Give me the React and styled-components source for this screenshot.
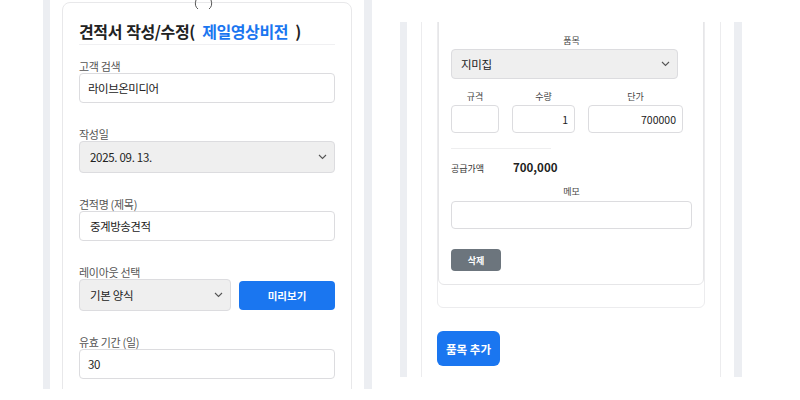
import React from "react";
import styled, { createGlobalStyle } from "styled-components";

const GlobalStyle = createGlobalStyle`
  body {
    margin: 0;
    background: #fff;
    font-family: "Noto Sans CJK KR", "Noto Sans", sans-serif;
    color: #222;
  }
  * { box-sizing: border-box; }
`;

const BLUE = "#1a76f0";

const Chevron = () => (
  <svg width="9" height="6" viewBox="0 0 9 6">
    <path d="M1 1 L4.5 4.5 L8 1" fill="none" stroke="#555" strokeWidth="1.1" />
  </svg>
);

const App = () => {
  return (
    <>
      <GlobalStyle />
      <Page>
        <Panel $w={329} $h={389}>
          <Strip $w={7} />
          <Gutter $l={12} $r={12}>
            <Knob>
              <svg width="24" height="10" viewBox="0 0 24 10">
                <path d="M4 0 Q2 6 6 9" fill="none" stroke="#555" strokeWidth="1" />
                <path d="M19 0 Q21 6 17 9" fill="none" stroke="#555" strokeWidth="1" />
              </svg>
            </Knob>
            <FormCard>
              <Title>
                견적서 작성/수정( <Accent>제일영상비전</Accent> )
              </Title>
              <Field>
                <Label>고객 검색</Label>
                <TextInput>라이브온미디어</TextInput>
              </Field>
              <Field>
                <Label>작성일</Label>
                <SelectBox>
                  <span>2025. 09. 13.</span>
                  <Chevron />
                </SelectBox>
              </Field>
              <Field>
                <Label>견적명 (제목)</Label>
                <TextInput $pad={10}>중계방송견적</TextInput>
              </Field>
              <Field>
                <Label>레이아웃 선택</Label>
                <InlineRow>
                  <SelectBox $w={152}>
                    <span>기본 양식</span>
                    <Chevron />
                  </SelectBox>
                  <PrimaryButton>미리보기</PrimaryButton>
                </InlineRow>
              </Field>
              <Field>
                <Label>유효 기간 (일)</Label>
                <TextInput>30</TextInput>
              </Field>
            </FormCard>
          </Gutter>
          <Strip $w={8} />
        </Panel>

        <Panel $w={342} $h={355} $top={22}>
          <Strip $w={7} />
          <Gutter $l={14} $r={13}>
            <ItemsCard>
              <ItemList>
                <ItemCard>
                  <ItemLabel>품목</ItemLabel>
                  <ItemSelect>
                    <span>지미집</span>
                    <Chevron />
                  </ItemSelect>
                  <SpecRow>
                    <SpecCol $w={48}>
                      <ItemLabel>규격</ItemLabel>
                      <SmallInput />
                    </SpecCol>
                    <SpecCol $w={63}>
                      <ItemLabel>수량</ItemLabel>
                      <SmallInput>1</SmallInput>
                    </SpecCol>
                    <SpecCol $w={95}>
                      <ItemLabel>단가</ItemLabel>
                      <SmallInput>700000</SmallInput>
                    </SpecCol>
                  </SpecRow>
                  <Divider />
                  <SupplyRow>
                    <SupplyLabel>공급가액</SupplyLabel>
                    <SupplyValue>700,000</SupplyValue>
                  </SupplyRow>
                  <MemoLabel>메모</MemoLabel>
                  <SmallInput />
                  <DeleteButton>삭제</DeleteButton>
                </ItemCard>
              </ItemList>
              <AddButton>품목 추가</AddButton>
            </ItemsCard>
          </Gutter>
          <Strip $w={8} />
        </Panel>
      </Page>
    </>
  );
};

export default App;

const Page = styled.div`
  display: flex;
  align-items: flex-start;
  gap: 28px;
  padding-left: 43px;
  width: 800px;
  height: 400px;
  overflow: hidden;
`;

const Panel = styled.div`
  display: flex;
  flex-shrink: 0;
  width: ${({ $w }) => $w}px;
  height: ${({ $h }) => $h}px;
  margin-top: ${({ $top }) => $top || 0}px;
  overflow: hidden;
`;

const Strip = styled.div`
  width: ${({ $w }) => $w}px;
  flex-shrink: 0;
  background: #eceef2;
`;

const Gutter = styled.div`
  flex: 1;
  position: relative;
  padding: 0 ${({ $r }) => $r}px 0 ${({ $l }) => $l}px;
  overflow: hidden;
`;

const Knob = styled.div`
  position: absolute;
  left: 142px;
  top: 0;
  line-height: 0;
`;

const FormCard = styled.div`
  margin-top: 2px;
  height: 420px;
  border: 1px solid #e8e8ea;
  border-radius: 8px;
  padding: 17px 16px;
`;

const Title = styled.div`
  font-size: 16px;
  font-weight: 700;
  line-height: 22px;
  letter-spacing: -0.4px;
  word-spacing: 1px;
  color: #222;
  padding-bottom: 2px;
  border-bottom: 1px solid #f0f0f2;
  margin-bottom: 14px;
`;

const Accent = styled.span`
  color: ${BLUE};
  margin: 0 3px;
`;

const Field = styled.div`
  margin-bottom: 24px;
`;

const Label = styled.div`
  font-size: 11px;
  line-height: 14px;
  color: #555;
  margin-bottom: 0;
  letter-spacing: -0.3px;
`;

const TextInput = styled.div`
  height: 30px;
  border: 1px solid #dcdcdf;
  border-radius: 4px;
  background: #fff;
  display: flex;
  align-items: center;
  padding-left: ${({ $pad }) => $pad || 8}px;
  font-size: 11.5px;
  letter-spacing: -0.5px;
  color: #222;
`;

const SelectBox = styled.div`
  width: ${({ $w }) => ($w ? `${$w}px` : "100%")};
  height: 32px;
  flex-shrink: 0;
  border: 1px solid #dcdcdf;
  border-radius: 4px;
  background: #efefef;
  display: flex;
  align-items: center;
  justify-content: space-between;
  padding: 0 7px 0 10px;
  font-size: 11.5px;
  letter-spacing: -0.3px;
  color: #222;
`;

const InlineRow = styled.div`
  display: flex;
  align-items: center;
  gap: 8px;
`;

const PrimaryButton = styled.div`
  flex: 1;
  height: 29px;
  border-radius: 4px;
  background: ${BLUE};
  color: #fff;
  font-size: 10.5px;
  font-weight: 700;
  display: flex;
  align-items: center;
  justify-content: center;
`;

const ItemsCard = styled.div`
  margin-top: -20px;
  height: 420px;
  border: 1px solid #ececee;
  border-radius: 8px;
  padding: 0 15px;
`;

const ItemList = styled.div`
  margin-top: 8px;
  border: 1px solid #ececee;
  border-radius: 6px;
  padding-bottom: 22px;
`;

const ItemCard = styled.div`
  border: 1px solid #e6e6e8;
  border-radius: 6px;
  padding: 21px 11px 13px 12px;
`;

const ItemLabel = styled.div`
  font-size: 9px;
  line-height: 14px;
  color: #444;
  text-align: center;
  margin-bottom: 1px;
`;

const ItemSelect = styled.div`
  width: 227px;
  height: 30px;
  border: 1px solid #dcdcdf;
  border-radius: 4px;
  background: #efefef;
  display: flex;
  align-items: center;
  justify-content: space-between;
  padding: 0 7px 0 9px;
  font-size: 11.5px;
  letter-spacing: -0.3px;
`;

const SpecRow = styled.div`
  display: flex;
  gap: 13px;
  margin-top: 11px;
`;

const SpecCol = styled.div`
  width: ${({ $w }) => $w}px;
  display: flex;
  flex-direction: column;
`;

const SmallInput = styled.div`
  height: 28px;
  border: 1px solid #dcdcdf;
  border-radius: 4px;
  background: #fff;
  display: flex;
  align-items: center;
  justify-content: flex-end;
  padding-right: 6px;
  font-size: 10.5px;
  color: #222;
`;

const Divider = styled.div`
  width: 100px;
  height: 1px;
  background: #eeeeef;
  margin-top: 15px;
`;

const SupplyRow = styled.div`
  display: flex;
  align-items: baseline;
  margin-top: 10px;
`;

const SupplyLabel = styled.div`
  width: 62px;
  font-size: 9px;
  color: #333;
`;

const SupplyValue = styled.div`
  font-size: 11.5px;
  line-height: 16px;
  font-weight: 700;
  color: #222;
`;

const MemoLabel = styled(ItemLabel)`
  margin-top: 10px;
  margin-bottom: 2px;
`;

const DeleteButton = styled.div`
  margin-top: 20px;
  width: 50px;
  height: 22px;
  border-radius: 4px;
  background: #6c757d;
  color: #fff;
  font-size: 9px;
  font-weight: 700;
  display: flex;
  align-items: center;
  justify-content: center;
`;

const AddButton = styled.div`
  margin-top: 23px;
  width: 63px;
  height: 35px;
  border-radius: 6px;
  background: ${BLUE};
  color: #fff;
  font-size: 11.5px;
  font-weight: 700;
  display: flex;
  align-items: center;
  justify-content: center;
`;
